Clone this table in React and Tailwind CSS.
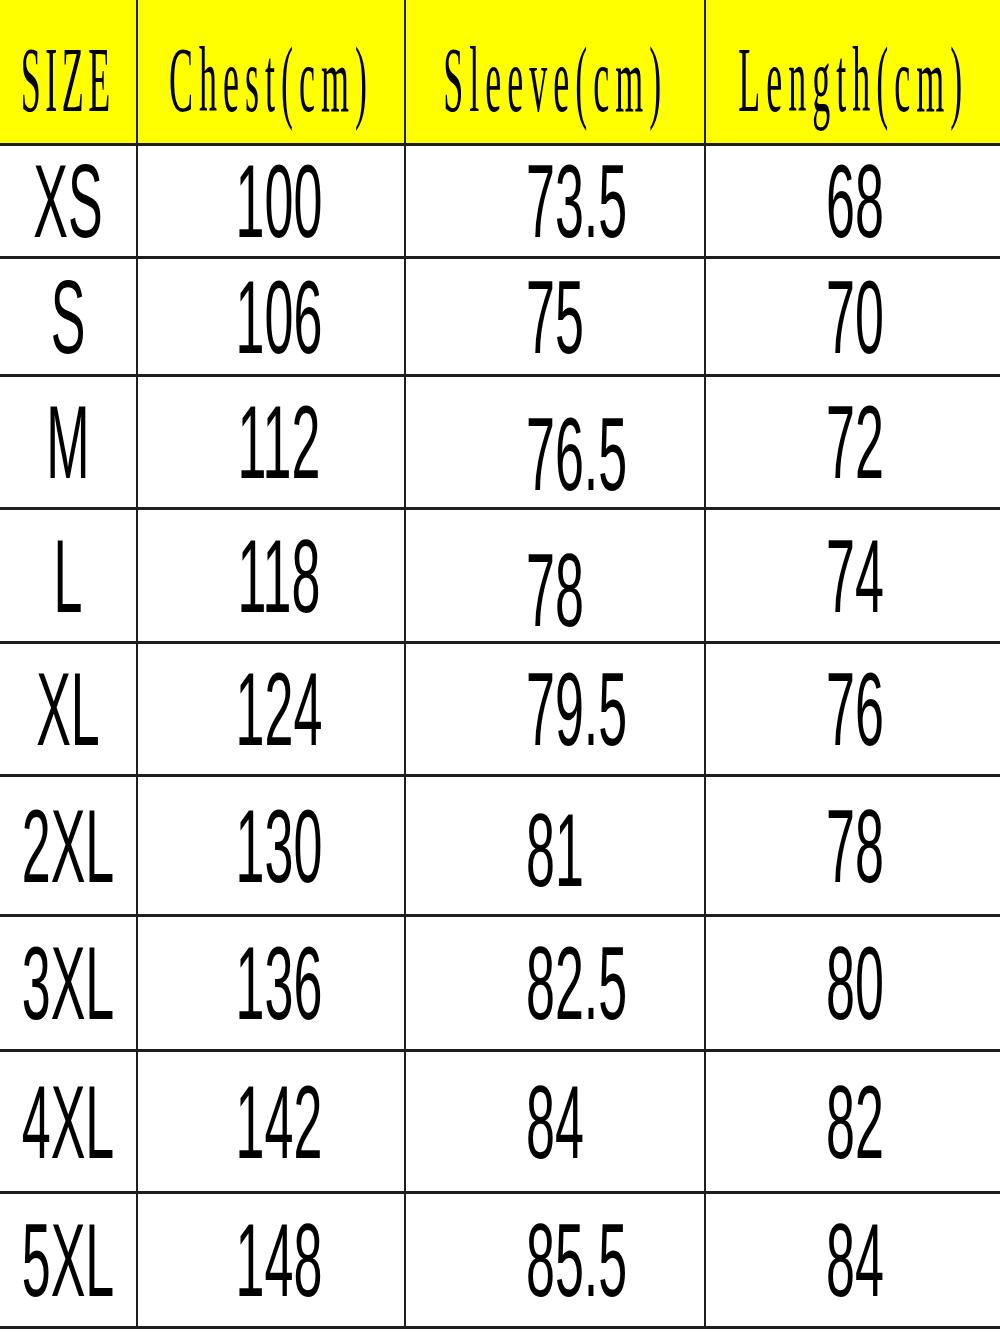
import React from "react";

const rows = [
  { size: "XS", chest: "100", sleeve: "73.5", length: "68", h: "h-[113px]", sd: "" },
  { size: "S", chest: "106", sleeve: "75", length: "70", h: "h-[118px]", sd: "" },
  { size: "M", chest: "112", sleeve: "76.5", length: "72", h: "h-[133px]", sd: "pt-6" },
  { size: "L", chest: "118", sleeve: "78", length: "74", h: "h-[134px]", sd: "pt-7" },
  { size: "XL", chest: "124", sleeve: "79.5", length: "76", h: "h-[133px]", sd: "" },
  { size: "2XL", chest: "130", sleeve: "81", length: "78", h: "h-[140px]", sd: "pt-2" },
  { size: "3XL", chest: "136", sleeve: "82.5", length: "80", h: "h-[135px]", sd: "" },
  { size: "4XL", chest: "142", sleeve: "84", length: "82", h: "h-[142px]", sd: "" },
  { size: "5XL", chest: "148", sleeve: "85.5", length: "84", h: "h-[135px]", sd: "" },
];

function Num({ children, left }) {
  return (
    <span
      className={
        "inline-block whitespace-nowrap leading-none text-[52px] text-black scale-y-[2] " +
        (left ? "origin-left" : "origin-center")
      }
      style={{ fontFamily: '"Liberation Sans", Arial, sans-serif' }}
    >
      {children}
    </span>
  );
}

function Head({ children, tight }) {
  return (
    <span
      className={
        "inline-block whitespace-nowrap leading-none text-[48px] text-black scale-x-[0.75] scale-y-[1.95] origin-center " +
        (tight ? "tracking-[6px]" : "tracking-[8px]")
      }
      style={{ fontFamily: '"Liberation Serif", "Times New Roman", serif' }}
    >
      {children}
    </span>
  );
}

export default function App() {
  return (
    <div className="w-[1000px] h-[1332px] bg-white overflow-hidden">
      <div className="grid grid-cols-[138px_268px_300px_294px] h-[146px] bg-[#ffff00] border-b-[3px] border-[#1e1e1e]">
        <div className="flex items-center justify-center pt-4 border-r-2 border-[#1e1e1e]">
          <Head tight>SIZE</Head>
        </div>
        <div className="flex items-center justify-center pt-4 border-r-2 border-[#1e1e1e]">
          <Head>Chest(cm)</Head>
        </div>
        <div className="flex items-center justify-center pt-4 border-r-2 border-[#1e1e1e]">
          <Head>Sleeve(cm)</Head>
        </div>
        <div className="flex items-center justify-center pt-4">
          <Head>Length(cm)</Head>
        </div>
      </div>
      {rows.map((r) => (
        <div
          key={r.size}
          className={"grid grid-cols-[138px_268px_300px_294px] border-b-[3px] border-[#1e1e1e] " + r.h}
        >
          <div className="flex items-center justify-center border-r-2 border-[#1e1e1e]">
            <Num>{r.size}</Num>
          </div>
          <div className="flex items-center justify-center pl-4 border-r-2 border-[#1e1e1e]">
            <Num>{r.chest}</Num>
          </div>
          <div className={"flex items-center pl-[120px] border-r-2 border-[#1e1e1e] " + r.sd}>
            <Num left>{r.sleeve}</Num>
          </div>
          <div className="flex items-center justify-center pl-1">
            <Num>{r.length}</Num>
          </div>
        </div>
      ))}
    </div>
  );
}
